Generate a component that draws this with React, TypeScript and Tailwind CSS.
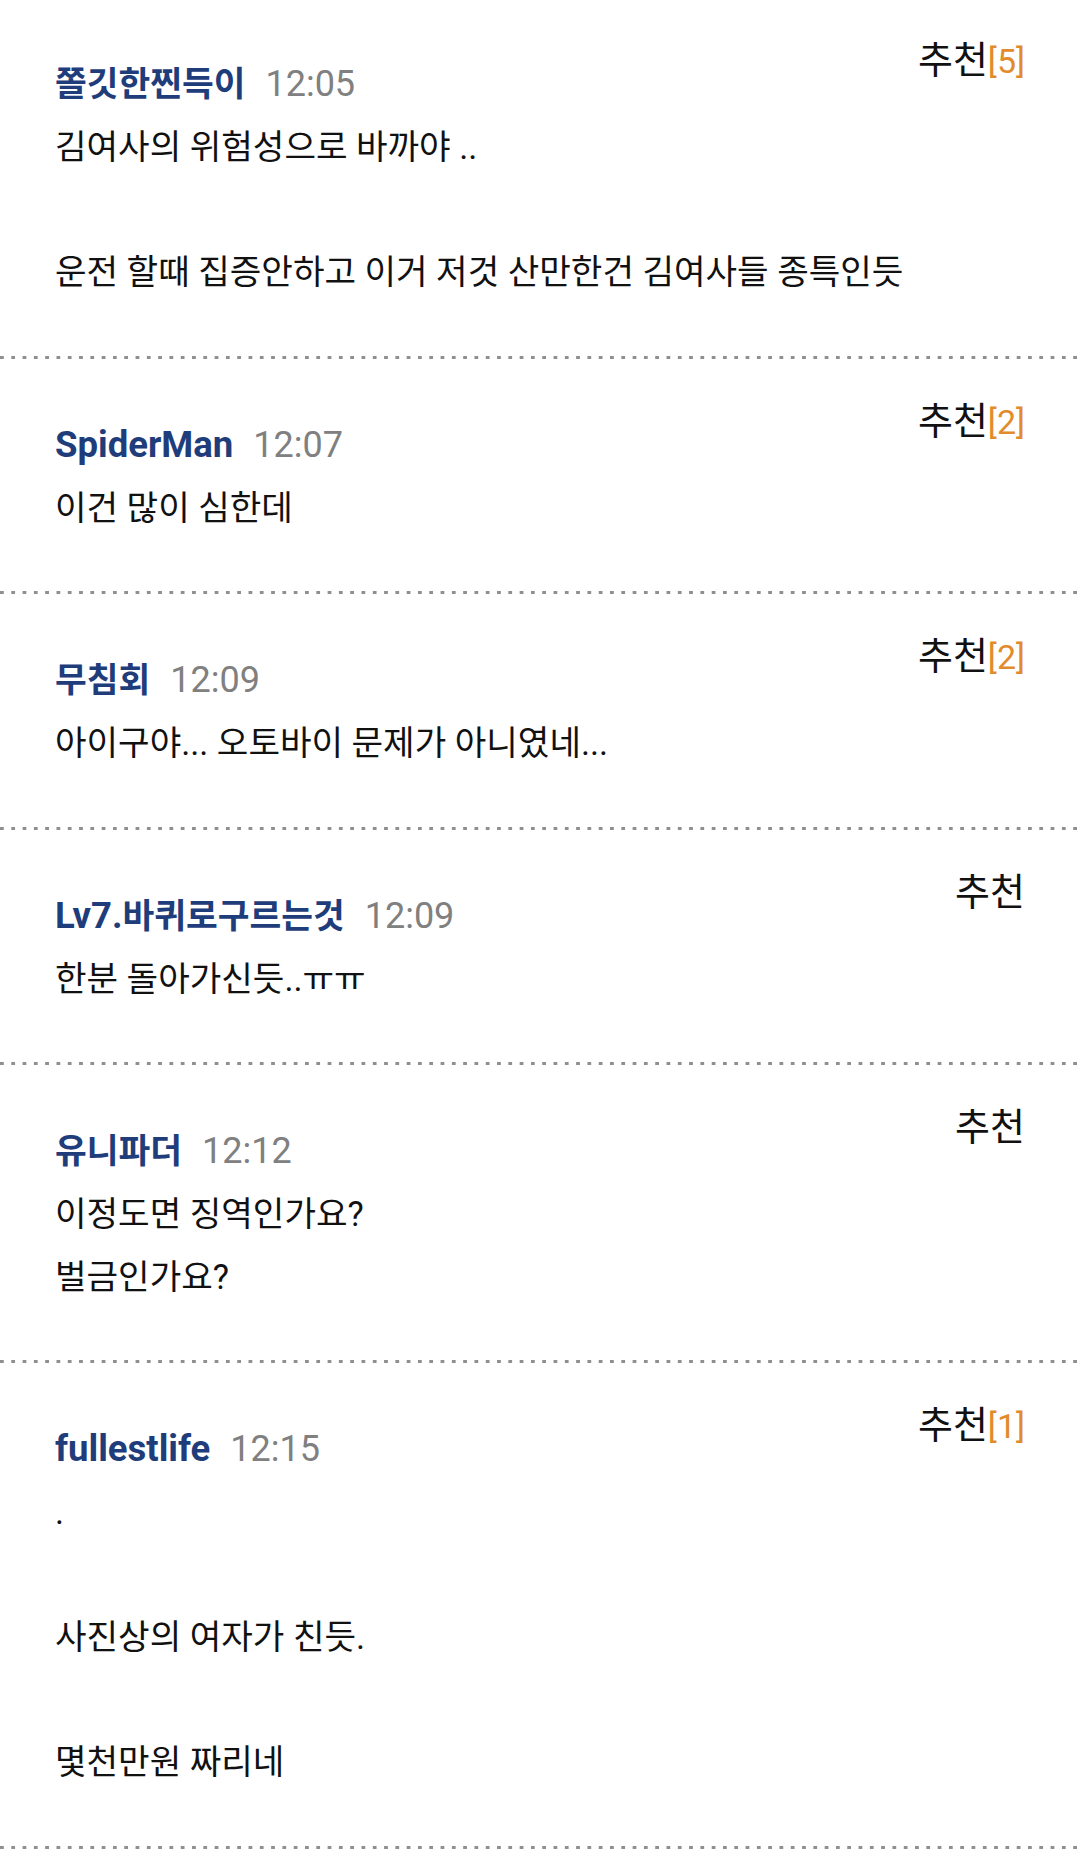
import React from "react"

type Comment = {
  name: string
  time: string
  likes: number
  lines: string[]
}

const comments: Comment[] = [
  {
    name: "쫄깃한찐득이",
    time: "12:05",
    likes: 5,
    lines: ["김여사의 위험성으로 바까야 ..", "", "운전 할때 집증안하고 이거 저것 산만한건 김여사들 종특인듯"],
  },
  { name: "SpiderMan", time: "12:07", likes: 2, lines: ["이건 많이 심한데"] },
  { name: "무침회", time: "12:09", likes: 2, lines: ["아이구야... 오토바이 문제가 아니였네..."] },
  { name: "Lv7.바퀴로구르는것", time: "12:09", likes: 0, lines: ["한분 돌아가신듯..ㅠㅠ"] },
  { name: "유니파더", time: "12:12", likes: 0, lines: ["이정도면 징역인가요?", "벌금인가요?"] },
  {
    name: "fullestlife",
    time: "12:15",
    likes: 1,
    lines: [".", "", "사진상의 여자가 친듯.", "", "몇천만원 짜리네"],
  },
]

// hangul in the nick renders a bit smaller than the latin part
function Nick({ text }: { text: string }) {
  const parts = text.split(/([\uac00-\ud7a3\u3131-\u318e]+)/)
  return (
    <>
      {parts.map((p, i) =>
        /[\uac00-\ud7a3\u3131-\u318e]/.test(p) ? (
          <span key={i} className="text-[34.5px] leading-none">
            {p}
          </span>
        ) : (
          <React.Fragment key={i}>{p}</React.Fragment>
        )
      )}
    </>
  )
}

function CommentItem({ c }: { c: Comment }) {
  return (
    <div>
      <div className="px-[55px] pt-[40px] pb-[52px]">
        <div className="flex justify-between items-start">
          <div className="pt-[24px] flex items-baseline leading-[44px]">
            <span className="text-[36.5px] font-bold text-[#1e3d7a]">
              <Nick text={c.name} />
            </span>
            <span className="ml-[20px] text-[36px] text-[#808080]">{c.time}</span>
          </div>
          <div className="text-[38px] leading-[44px] text-[#111]">
            추천
            {c.likes > 0 && <span className="text-[34px] text-[#e28b2c]">[{c.likes}]</span>}
          </div>
        </div>
        <div className="mt-[10px] text-[34.3px] leading-[62.5px] text-[#111]">
          {c.lines.map((line, i) => (
            <div key={i}>{line || "\u00a0"}</div>
          ))}
        </div>
      </div>
      <div className="h-[3px] bg-[linear-gradient(to_right,#8f8f8f_3.5px,transparent_3.5px)] bg-[length:11.3px_3px] bg-repeat-x" />
    </div>
  )
}

export default function App() {
  return (
    <div className="min-h-[1865px] bg-white overflow-hidden font-[Roboto,'Noto_Sans_CJK_KR',sans-serif]">
      <div className="-mt-[2px]">
        {comments.map((c, i) => (
          <CommentItem key={i} c={c} />
        ))}
      </div>
    </div>
  )
}
